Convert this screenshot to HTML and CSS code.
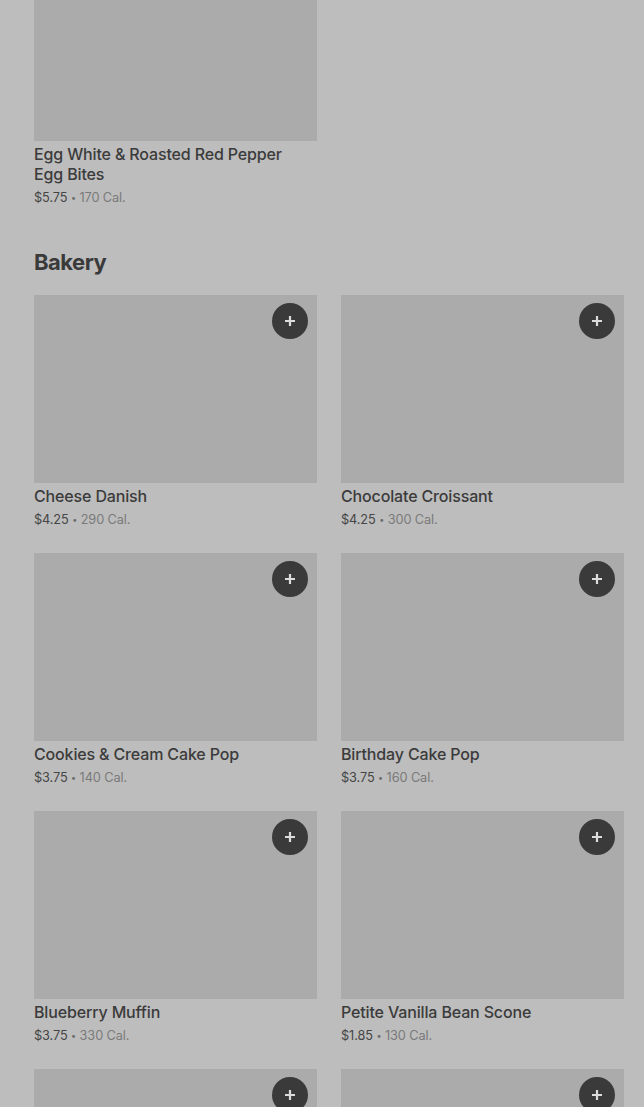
FILE: index.html
```html
<!DOCTYPE html>
<html>
<head>
<meta charset="utf-8">
<link rel="stylesheet" href="styles.css">
</head>
<body>
<main class="page">
  <section class="section section-first">
    <div class="grid">
      <article class="card">
        <div class="thumb"><button class="add"><svg viewBox="0 0 12 12"><path d="M6 1v10M1 6h10"/></svg></button></div>
        <h3 class="name">Egg White &amp; Roasted Red Pepper Egg Bites</h3>
        <p class="meta"><span class="price">$5.75</span> <span class="sep">•</span> <span class="cal">170 Cal.</span></p>
      </article>
    </div>
  </section>
  <section class="section">
    <h2 class="heading">Bakery</h2>
    <div class="grid">
      <article class="card">
        <div class="thumb"><button class="add"><svg viewBox="0 0 12 12"><path d="M6 1v10M1 6h10"/></svg></button></div>
        <h3 class="name">Cheese Danish</h3>
        <p class="meta"><span class="price">$4.25</span> <span class="sep">•</span> <span class="cal">290 Cal.</span></p>
      </article>
      <article class="card">
        <div class="thumb"><button class="add"><svg viewBox="0 0 12 12"><path d="M6 1v10M1 6h10"/></svg></button></div>
        <h3 class="name">Chocolate Croissant</h3>
        <p class="meta"><span class="price">$4.25</span> <span class="sep">•</span> <span class="cal">300 Cal.</span></p>
      </article>
      <article class="card">
        <div class="thumb"><button class="add"><svg viewBox="0 0 12 12"><path d="M6 1v10M1 6h10"/></svg></button></div>
        <h3 class="name">Cookies &amp; Cream Cake Pop</h3>
        <p class="meta"><span class="price">$3.75</span> <span class="sep">•</span> <span class="cal">140 Cal.</span></p>
      </article>
      <article class="card">
        <div class="thumb"><button class="add"><svg viewBox="0 0 12 12"><path d="M6 1v10M1 6h10"/></svg></button></div>
        <h3 class="name">Birthday Cake Pop</h3>
        <p class="meta"><span class="price">$3.75</span> <span class="sep">•</span> <span class="cal">160 Cal.</span></p>
      </article>
      <article class="card">
        <div class="thumb"><button class="add"><svg viewBox="0 0 12 12"><path d="M6 1v10M1 6h10"/></svg></button></div>
        <h3 class="name">Blueberry Muffin</h3>
        <p class="meta"><span class="price">$3.75</span> <span class="sep">•</span> <span class="cal">330 Cal.</span></p>
      </article>
      <article class="card">
        <div class="thumb"><button class="add"><svg viewBox="0 0 12 12"><path d="M6 1v10M1 6h10"/></svg></button></div>
        <h3 class="name">Petite Vanilla Bean Scone</h3>
        <p class="meta"><span class="price">$1.85</span> <span class="sep">•</span> <span class="cal">130 Cal.</span></p>
      </article>
      <article class="card">
        <div class="thumb"><button class="add"><svg viewBox="0 0 12 12"><path d="M6 1v10M1 6h10"/></svg></button></div>
      </article>
      <article class="card">
        <div class="thumb"><button class="add"><svg viewBox="0 0 12 12"><path d="M6 1v10M1 6h10"/></svg></button></div>
      </article>
    </div>
  </section>
</main>
</body>
</html>
```
FILE: styles.css
```css
html, body {
  margin: 0;
  padding: 0;
  background: #bdbdbd;
  overflow: hidden;
}
body {
  font-family: Inter, "Noto Sans", sans-serif;
  color: #3b3b3b;
}
.page {
  padding: 0 20px 0 34px;
  margin-top: -47px;
}
.section-first {
  margin-bottom: 41px;
}
.heading {
  margin: 0 0 19px;
  font-size: 22px;
  line-height: 28px;
  font-weight: 700;
  letter-spacing: -0.5px;
  color: #3a3a3a;
}
.grid {
  display: grid;
  grid-template-columns: 283px 283px;
  column-gap: 24px;
  row-gap: 24px;
}
.card {
  display: flex;
  flex-direction: column;
}
.thumb {
  position: relative;
  height: 188px;
  background: #ababab;
}
.add {
  position: absolute;
  top: 8px;
  right: 9px;
  width: 36px;
  height: 36px;
  border-radius: 50%;
  border: none;
  padding: 0;
  background: #3a3a3a;
  display: flex;
  align-items: center;
  justify-content: center;
}
.add svg {
  width: 12px;
  height: 12px;
  stroke: #dcdcdc;
  stroke-width: 2.2;
  fill: none;
}
.name {
  margin: 3px 0 0;
  font-size: 16px;
  line-height: 20px;
  font-weight: 500;
  letter-spacing: -0.15px;
  color: #3b3b3b;
  padding-right: 20px;
}
.meta {
  margin: 5px 0 0;
  font-size: 12.75px;
  line-height: 18px;
  color: #6f6f6f;
  letter-spacing: -0.1px;
}
.price {
  color: #454545;
}
.sep {
  font-size: 9px;
  vertical-align: 1px;
  color: #6a6a6a;
}
.cal {
  color: #7a7a7a;
}
```
